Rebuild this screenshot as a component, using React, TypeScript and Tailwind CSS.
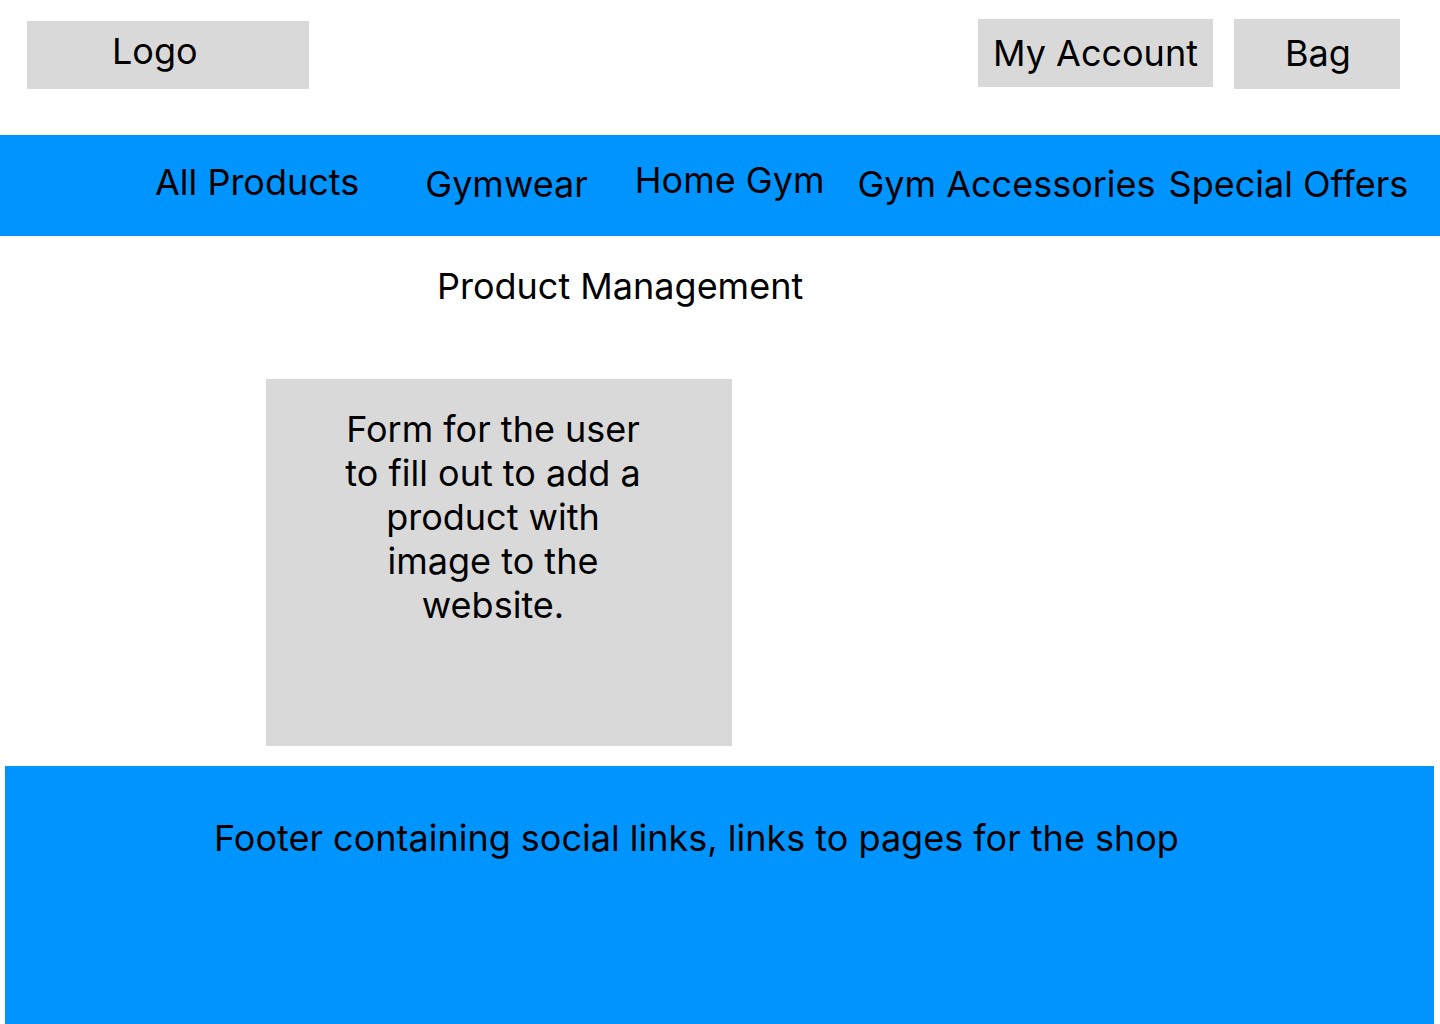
import React from "react";

const navLinks = [
  { label: "All Products", cls: "ml-[155px] mt-[25px]" },
  { label: "Gymwear", cls: "ml-[66px] mt-[27px]" },
  { label: "Home Gym", cls: "ml-[47px] mt-[23px]" },
  { label: "Gym Accessories", cls: "ml-[33px] mt-[27px]" },
  { label: "Special Offers", cls: "ml-[13px] mt-[27px]" },
];

function App() {
  return (
    <div className="w-[1440px] h-[1024px] overflow-hidden bg-white text-black text-[36px] leading-[44px] font-['Inter',sans-serif]">
      {/* Header */}
      <div className="flex h-[135px]">
        <div className="ml-[27px] mt-[21px] w-[282px] h-[68px] bg-[#d9d9d9] pl-[85px] pt-[8px]">
          Logo
        </div>
        <div className="ml-auto mr-[40px] mt-[19px] flex items-start gap-[21px]">
          <div className="w-[235px] h-[68px] bg-[#d9d9d9] pl-[15px] pt-[12px]">
            My Account
          </div>
          <div className="w-[166px] h-[70px] bg-[#d9d9d9] pl-[51px] pt-[12px]">
            Bag
          </div>
        </div>
      </div>

      {/* Nav */}
      <nav className="flex items-start h-[101px] bg-[#0094ff]">
        {navLinks.map((link) => (
          <a key={link.label} className={`whitespace-nowrap ${link.cls}`}>
            {link.label}
          </a>
        ))}
      </nav>

      {/* Main */}
      <main>
        <h1 className="ml-[437px] mt-[28px]">Product Management</h1>
        <div className="ml-[266px] mt-[71px] w-[466px] h-[367px] bg-[#d9d9d9] pt-[28px]">
          <p className="ml-[77px] w-[300px] text-center">
            Form for the user to fill out to add a product with image to the
            website.
          </p>
        </div>
      </main>

      {/* Footer */}
      <footer className="ml-[5px] mt-[20px] w-[1429px] h-[258px] bg-[#0094ff] pl-[209px] pt-[50px]">
        Footer containing social links, links to pages for the shop
      </footer>
    </div>
  );
}

export default App;
